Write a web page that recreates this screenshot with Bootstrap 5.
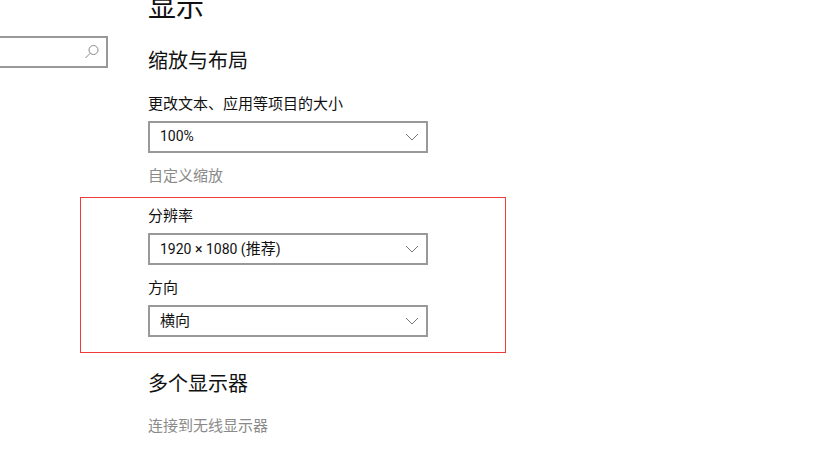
<!DOCTYPE html>
<html lang="zh-CN">
<head>
    <meta charset="UTF-8">
    <title>显示</title>
    <link href="https://cdn.jsdelivr.net/npm/bootstrap@5.3.0/dist/css/bootstrap.min.css" rel="stylesheet">
    <style>
        html, body { height: 454px; overflow: hidden; }
        body { font-family: "Noto Sans CJK SC", "Liberation Sans", sans-serif; color: #111; background: #fff; }
        .side-pane { width: 108px; padding-top: 36px; flex: none; }
        .search-box { height: 32px; border: 2px solid #999; border-left: 0; padding-right: 6px; }
        .main-pane { margin-left: 40px; width: 358px; margin-top: -13px; }
        .page-title { font-size: 28px; line-height: 36px; height: 36px; margin: 0; font-weight: 400; }
        .section-title { font-size: 20px; line-height: 28px; font-weight: 400; margin: 0; }
        .field-label { font-size: 15px; line-height: 20px; margin: 0; }
        .combo { width: 280px; height: 32px; border: 2px solid #999; padding: 0 7px 0 10px; font-size: 15px; line-height: 26px; }
        .combo-text { padding-bottom: 2px; }
        .latin-text { font-family: Roboto, "Noto Sans CJK SC", sans-serif; font-size: 14px; }
        .plain-link { font-size: 15px; line-height: 20px; color: #8a8a8a; }
        .scale-title { margin-top: 23px; }
        .scale-label { margin-top: 19px; margin-bottom: 8px; }
        .scale-link { margin-top: 12px; }
        .red-frame { border: 1px solid #f03a3a; width: 426px; height: 156px; margin-left: -68px; margin-top: 12px; padding: 7px 0 0 67px; }
        .frame-label { margin-bottom: 8px; }
        .frame-label-2 { margin-top: 12px; margin-bottom: 8px; }
        .multi-title { margin-top: 16px; }
        .wireless-link { margin-top: 18px; }
    </style>
</head>
<body>
<div class="d-flex">
    <div class="side-pane">
        <div class="search-box d-flex align-items-center justify-content-end">
            <svg width="16" height="16" viewBox="0 0 16 16" fill="none" stroke="#888" stroke-width="1">
                <circle cx="9.5" cy="6" r="4.5"/>
                <path d="M6.3 9.2 1.5 14"/>
            </svg>
        </div>
    </div>
    <div class="main-pane">
        <h1 class="page-title">显示</h1>
        <h2 class="section-title scale-title">缩放与布局</h2>
        <p class="field-label scale-label">更改文本、应用等项目的大小</p>
        <div class="combo d-flex align-items-center justify-content-between">
            <span class="combo-text latin-text">100%</span>
            <svg width="14" height="8" viewBox="0 0 14 8" fill="none" stroke="#777" stroke-width="1"><path d="M1 1 7 7 13 1"/></svg>
        </div>
        <div class="plain-link scale-link">自定义缩放</div>
        <div class="red-frame">
            <p class="field-label frame-label">分辨率</p>
            <div class="combo d-flex align-items-center justify-content-between">
                <span class="combo-text"><span class="latin-text">1920 × 1080 (</span>推荐<span class="latin-text">)</span></span>
                <svg width="14" height="8" viewBox="0 0 14 8" fill="none" stroke="#777" stroke-width="1"><path d="M1 1 7 7 13 1"/></svg>
            </div>
            <p class="field-label frame-label-2">方向</p>
            <div class="combo d-flex align-items-center justify-content-between">
                <span class="combo-text">横向</span>
                <svg width="14" height="8" viewBox="0 0 14 8" fill="none" stroke="#777" stroke-width="1"><path d="M1 1 7 7 13 1"/></svg>
            </div>
        </div>
        <h2 class="section-title multi-title">多个显示器</h2>
        <div class="plain-link wireless-link">连接到无线显示器</div>
    </div>
</div>
<script src="https://cdn.jsdelivr.net/npm/bootstrap@5.3.0/dist/js/bootstrap.bundle.min.js"></script>
</body>
</html>
